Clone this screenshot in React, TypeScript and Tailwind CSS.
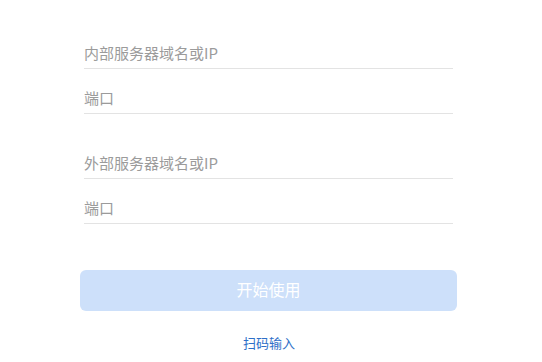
import { useState } from 'react';

function Field({ placeholder }: { placeholder: string }) {
  const [value, setValue] = useState('');
  return (
    <input
      value={value}
      onChange={(e) => setValue(e.target.value)}
      placeholder={placeholder}
      className="block h-[45px] w-full border-b border-[#e3e3e3] bg-transparent pt-[13px] text-[15px] text-[#333] outline-none placeholder:text-[#9b9b9b]"
    />
  );
}

export default function App() {
  return (
    <div className="min-h-screen bg-white font-['Noto_Sans_CJK_SC','Noto_Sans',sans-serif]">
      <div className="flex flex-col pt-[24px]">
        <div className="ml-[84px] w-[369px]">
          <Field placeholder="内部服务器域名或IP" />
          <Field placeholder="端口" />
          <div className="h-[20px]" />
          <Field placeholder="外部服务器域名或IP" />
          <Field placeholder="端口" />
        </div>
        <button
          type="button"
          disabled
          className="ml-[80px] mt-[46px] h-[41px] w-[377px] rounded-[6px] bg-[#cde0fa] pb-[3px] text-[16px] text-white"
        >
          开始使用
        </button>
        <button
          type="button"
          className="mt-[23px] ml-[243px] w-[52px] text-[13px] leading-[18px] text-[#2e6fc8]"
        >
          扫码输入
        </button>
      </div>
    </div>
  );
}
